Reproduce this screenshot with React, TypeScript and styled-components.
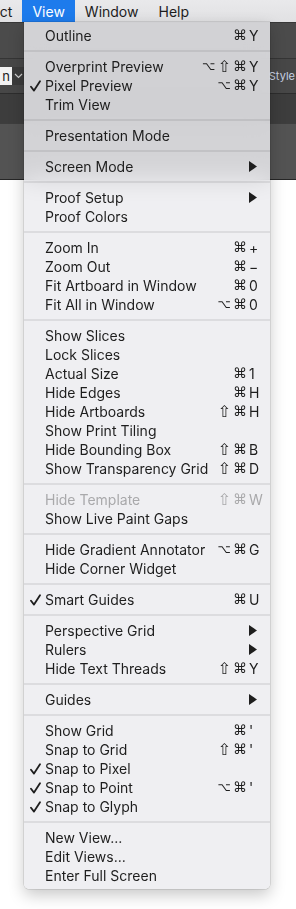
import React from "react";
import styled, { createGlobalStyle } from "styled-components";

const GlobalStyle = createGlobalStyle`
  html, body {
    margin: 0;
    padding: 0;
    background: #ffffff;
  }
  body {
    font-family: Inter, "Noto Sans", "DejaVu Sans", sans-serif;
    -webkit-font-smoothing: antialiased;
  }
`;

type Item = {
  label: string;
  mods?: string;
  keyChar?: string;
  sub?: boolean;
  checked?: boolean;
  disabled?: boolean;
};

const groups: Item[][] = [
  [{ label: "Outline", mods: "⌘", keyChar: "Y" }],
  [
    { label: "Overprint Preview", mods: "⌥⇧⌘", keyChar: "Y" },
    { label: "Pixel Preview", mods: "⌥⌘", keyChar: "Y", checked: true },
    { label: "Trim View" },
  ],
  [{ label: "Presentation Mode" }],
  [{ label: "Screen Mode", sub: true }],
  [{ label: "Proof Setup", sub: true }, { label: "Proof Colors" }],
  [
    { label: "Zoom In", mods: "⌘", keyChar: "+" },
    { label: "Zoom Out", mods: "⌘", keyChar: "−" },
    { label: "Fit Artboard in Window", mods: "⌘", keyChar: "0" },
    { label: "Fit All in Window", mods: "⌥⌘", keyChar: "0" },
  ],
  [
    { label: "Show Slices" },
    { label: "Lock Slices" },
    { label: "Actual Size", mods: "⌘", keyChar: "1" },
    { label: "Hide Edges", mods: "⌘", keyChar: "H" },
    { label: "Hide Artboards", mods: "⇧⌘", keyChar: "H" },
    { label: "Show Print Tiling" },
    { label: "Hide Bounding Box", mods: "⇧⌘", keyChar: "B" },
    { label: "Show Transparency Grid", mods: "⇧⌘", keyChar: "D" },
  ],
  [
    { label: "Hide Template", mods: "⇧⌘", keyChar: "W", disabled: true },
    { label: "Show Live Paint Gaps" },
  ],
  [
    { label: "Hide Gradient Annotator", mods: "⌥⌘", keyChar: "G" },
    { label: "Hide Corner Widget" },
  ],
  [{ label: "Smart Guides", mods: "⌘", keyChar: "U", checked: true }],
  [
    { label: "Perspective Grid", sub: true },
    { label: "Rulers", sub: true },
    { label: "Hide Text Threads", mods: "⇧⌘", keyChar: "Y" },
  ],
  [{ label: "Guides", sub: true }],
  [
    { label: "Show Grid", mods: "⌘", keyChar: "'" },
    { label: "Snap to Grid", mods: "⇧⌘", keyChar: "'" },
    { label: "Snap to Pixel", checked: true },
    { label: "Snap to Point", mods: "⌥⌘", keyChar: "'", checked: true },
    { label: "Snap to Glyph", checked: true },
  ],
  [
    { label: "New View..." },
    { label: "Edit Views..." },
    { label: "Enter Full Screen" },
  ],
];

// DejaVu draws these three at rather different sizes, so each gets its own
const glyphSize: Record<string, number> = { "⌥": 11.5, "⇧": 16, "⌘": 14 };

const Screen = styled.div`
  position: relative;
  width: 296px;
  height: 909px;
  overflow: hidden;
  display: flex;
  flex-direction: column;
  background: #ffffff;
`;

const MenuBar = styled.div`
  height: 22px;
  display: flex;
  align-items: stretch;
  background: linear-gradient(#e9e9eb, #e1e1e3);
  font-size: 14px;
  color: #1d1d1d;
`;

const MenuTitle = styled.div<{ $active?: boolean; $clip?: boolean }>`
  display: flex;
  align-items: center;
  padding: ${(p) => (p.$clip ? "0 10px 0 0" : "0 10px")};
  margin-left: ${(p) => (p.$clip ? "-31px" : "0")};
  background: ${(p) => (p.$active ? "#1d7bec" : "transparent")};
  color: ${(p) => (p.$active ? "#ffffff" : "inherit")};
`;

const Chrome = styled.div`
  display: flex;
  flex-direction: column;
  border-bottom: 1px solid #262626;
`;

const Strip = styled.div<{ $h: number; $bg: string }>`
  height: ${(p) => p.$h}px;
  background: ${(p) => p.$bg};
  border-top: 1px solid rgba(0, 0, 0, 0.25);
  display: flex;
  align-items: center;
`;

const InputBox = styled.div`
  width: 12px;
  height: 18px;
  background: #f2f2f2;
  color: #222;
  font-size: 13px;
  display: flex;
  align-items: center;
  justify-content: flex-end;
  padding-right: 2px;
  box-sizing: border-box;
  overflow: hidden;
`;

const ChevronBox = styled.div`
  width: 12px;
  height: 18px;
  background: #3b3b3b;
  display: flex;
  align-items: center;
  justify-content: center;
`;

const StyleLabel = styled.div`
  margin-left: auto;
  margin-right: 1px;
  font-size: 11px;
  color: #c9d2e2;
`;

const Canvas = styled.div`
  flex: 1;
  background: #ffffff;
`;

const Menu = styled.div`
  position: absolute;
  top: 22px;
  left: 24px;
  width: 246px;
  padding: 4px 0;
  background: rgba(236, 236, 239, 0.84);
  backdrop-filter: blur(12px);
  border-radius: 0 0 5px 5px;
  box-shadow: 0 0 0 0.5px rgba(0, 0, 0, 0.18), 0 6px 16px rgba(0, 0, 0, 0.22);
  font-size: 14px;
`;

const Row = styled.div<{ $disabled?: boolean }>`
  height: 19px;
  display: grid;
  grid-template-columns: 21px 1fr auto 13px;
  align-items: center;
  padding-right: 8px;
  color: ${(p) => (p.$disabled ? "#a9a9ab" : "#1e1e1e")};
  white-space: nowrap;
`;

const CheckCell = styled.div`
  display: flex;
  align-items: center;
  padding-left: 6px;
`;

const Mods = styled.span`
  display: flex;
  justify-content: flex-end;
  align-items: center;
  gap: 2px;
  margin-right: 2px;
`;

const ModGlyph = styled.span<{ $size: number }>`
  min-width: 12px;
  text-align: center;
  font-family: "DejaVu Sans", sans-serif;
  font-size: ${(p) => p.$size}px;
  line-height: 19px;
`;

const KeyCell = styled.span`
  text-align: left;
  display: flex;
  align-items: center;
`;

const Separator = styled.div`
  height: 2px;
  margin: 5px 0;
  background: rgba(0, 0, 0, 0.08);
`;

const Check = () => (
  <svg width="11" height="12" viewBox="0 0 11 12">
    <path
      d="M1 6.8 L4 10.6 L10 1.2"
      fill="none"
      stroke="#1e1e1e"
      strokeWidth="1.8"
      strokeLinecap="round"
      strokeLinejoin="round"
    />
  </svg>
);

const Arrow = () => (
  <svg width="9" height="11" viewBox="0 0 9 11">
    <polygon points="0,0 8,5.5 0,11" fill="#1e1e1e" />
  </svg>
);

const Chevron = () => (
  <svg width="9" height="6" viewBox="0 0 9 6">
    <path d="M1 1 L4.5 4.5 L8 1" fill="none" stroke="#cfcfcf" strokeWidth="1.2" />
  </svg>
);

const MenuRow: React.FC<{ item: Item }> = ({ item }) => (
  <Row $disabled={item.disabled}>
    <CheckCell>{item.checked && <Check />}</CheckCell>
    <span>{item.label}</span>
    <Mods>
      {item.mods?.split("").map((m, i) => (
        <ModGlyph key={i} $size={glyphSize[m] ?? 14}>
          {m}
        </ModGlyph>
      ))}
    </Mods>
    <KeyCell>{item.sub ? <Arrow /> : item.keyChar}</KeyCell>
  </Row>
);

const App: React.FC = () => {
  return (
    <>
      <GlobalStyle />
      <Screen>
        <MenuBar>
          <MenuTitle $clip>Object</MenuTitle>
          <MenuTitle $active>View</MenuTitle>
          <MenuTitle>Window</MenuTitle>
          <MenuTitle>Help</MenuTitle>
        </MenuBar>
        <Chrome>
          <Strip $h={35} $bg="#4b4b4b" />
          <Strip $h={34} $bg="#474747">
            <InputBox>n</InputBox>
            <ChevronBox>
              <Chevron />
            </ChevronBox>
            <StyleLabel>Style</StyleLabel>
          </Strip>
          <Strip $h={29} $bg="#3d3d3d" />
          <Strip $h={55} $bg="#535353" />
        </Chrome>
        <Canvas />
        <Menu>
          {groups.map((group, gi) => (
            <React.Fragment key={gi}>
              {gi > 0 && <Separator />}
              {group.map((item) => (
                <MenuRow key={item.label} item={item} />
              ))}
            </React.Fragment>
          ))}
        </Menu>
      </Screen>
    </>
  );
};

export default App;
